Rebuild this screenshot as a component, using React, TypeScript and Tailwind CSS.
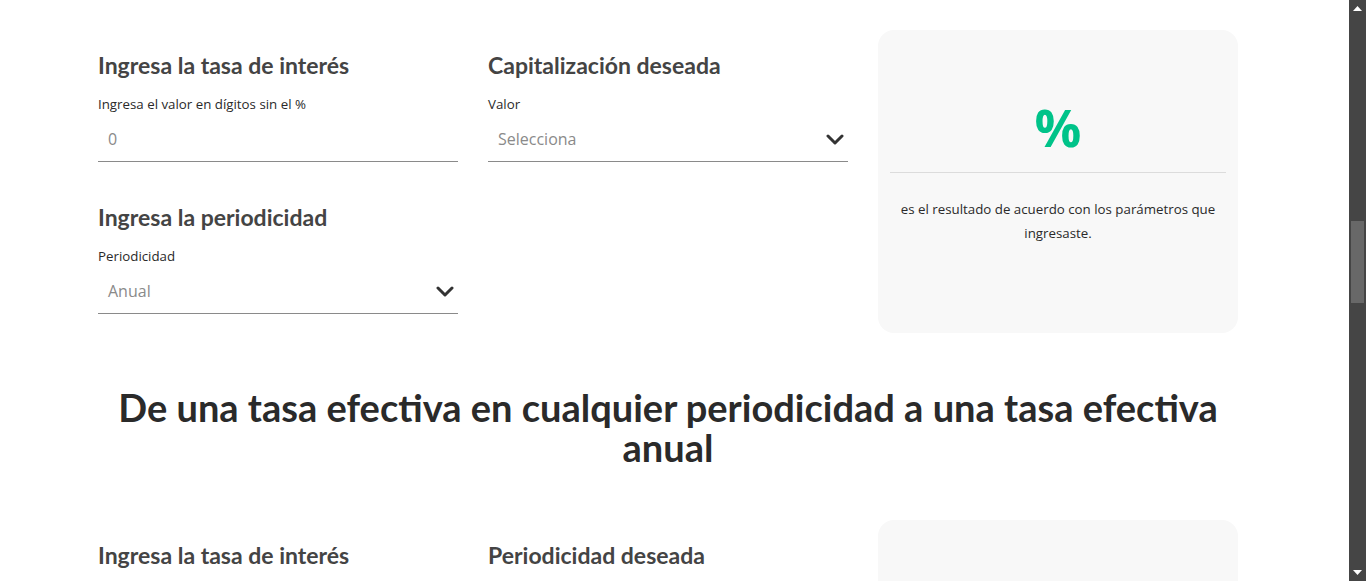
const headFont = { fontFamily: 'Lato, "Open Sans", sans-serif' };

function Chevron() {
  return (
    <svg width="18" height="11" viewBox="0 0 18 11" fill="none">
      <path d="M2 2 L9 9 L16 2" stroke="#333333" strokeWidth="3" strokeLinecap="round" strokeLinejoin="round" />
    </svg>
  );
}

function Field({ title, label, value, select }: { title: string; label: string; value: string; select?: boolean }) {
  return (
    <div className="flex flex-col">
      <h3 className="text-[23px] leading-[28px] font-bold text-[#444444]" style={headFont}>{title}</h3>
      <label className="mt-[15px] text-[13.3px] leading-[20px] text-[#2a2a2a]">{label}</label>
      <div className="h-[48px] pt-[3px] flex items-center justify-between border-b border-[#8a8a8a] pl-[10px] pr-[4px]">
        <span className="text-[16px] text-[#8a8a8a]">{value}</span>
        {select && <Chevron />}
      </div>
    </div>
  );
}

function ResultCard({ empty }: { empty?: boolean }) {
  return (
    <div className="w-[360px] h-[303px] shrink-0 bg-[#f8f8f8] rounded-[16px] px-[12px] pt-[67px] flex flex-col items-center">
      {!empty && (
        <>
          <div className="text-[52px] leading-[60px] font-bold text-[#00c389]">%</div>
          <div className="mt-[15px] w-full border-t border-[#dcdcdc]" />
          <p className="mt-[24px] px-[6px] text-center text-[13.3px] leading-[24px] text-[#2a2a2a]">
            es el resultado de acuerdo con los parámetros que ingresaste.
          </p>
        </>
      )}
    </div>
  );
}

export default function App() {
  return (
    <div className="h-[581px] w-[1366px] overflow-hidden flex bg-white" style={{ fontFamily: '"Open Sans", sans-serif' }}>
      <div className="flex-1 pl-[98px]">
        <div className="w-[1140px] pt-[30px]">
          <section className="flex gap-[30px]">
            <div className="flex-1 pt-[21px] grid grid-cols-2 gap-x-[30px] gap-y-[41px] content-start">
              <Field title="Ingresa la tasa de interés" label="Ingresa el valor en dígitos sin el %" value="0" />
              <Field title="Capitalización deseada" label="Valor" value="Selecciona" select />
              <Field title="Ingresa la periodicidad" label="Periodicidad" value="Anual" select />
            </div>
            <ResultCard />
          </section>

          <h2 className="mt-[54px] text-center text-[38px] leading-[40px] font-bold text-[#2a2a2a]" style={headFont}>
            De una tasa efectiva en cualquier periodicidad a una tasa efectiva anual
          </h2>

          <section className="mt-[53px] flex gap-[30px]">
            <div className="flex-1 pt-[21px] grid grid-cols-2 gap-x-[30px] content-start">
              <h3 className="text-[23px] leading-[28px] font-bold text-[#444444]" style={headFont}>Ingresa la tasa de interés</h3>
              <h3 className="text-[23px] leading-[28px] font-bold text-[#444444]" style={headFont}>Periodicidad deseada</h3>
            </div>
            <ResultCard empty />
          </section>
        </div>
      </div>

      {/* browser scrollbar */}
      <div className="w-[17px] h-full bg-[#454545] flex flex-col items-center justify-between py-[6px]">
        <svg width="9" height="5" viewBox="0 0 9 5"><path d="M0 5 L4.5 0 L9 5 Z" fill="#ffffff" /></svg>
        <div className="w-[13px] h-[82px] bg-[#686868] mt-[210px]" />
        <div className="flex-1" />
        <svg width="9" height="5" viewBox="0 0 9 5"><path d="M0 0 L4.5 5 L9 0 Z" fill="#ffffff" /></svg>
      </div>
    </div>
  );
}
